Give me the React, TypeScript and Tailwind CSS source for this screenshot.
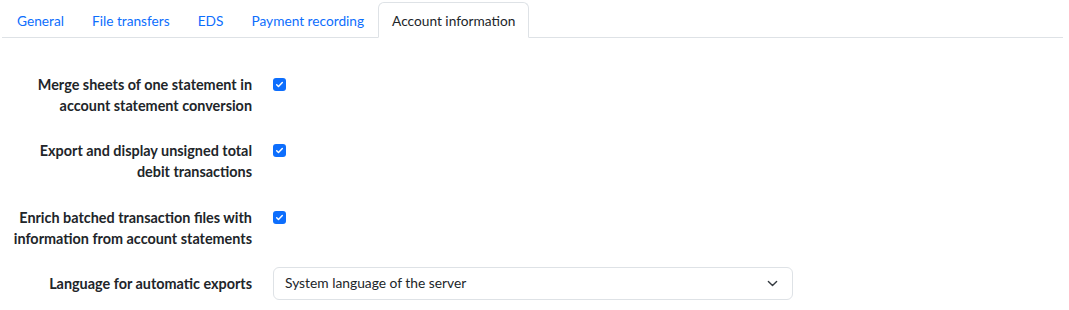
import React, { useState } from 'react';

const TABS = ['General', 'File transfers', 'EDS', 'Payment recording', 'Account information'];

const CheckRow = ({ label }: { label: React.ReactNode }) => (
  <div className="flex items-start">
    <div className="w-[252px] text-right font-bold text-[14.4px] leading-[21px] whitespace-nowrap">{label}</div>
    <div className="ml-[21px] pt-[4px]">
      <div className="w-[13px] h-[13px] rounded-[3px] bg-[#0d6efd] flex items-center justify-center">
        <svg width="9" height="9" viewBox="0 0 16 16" fill="none">
          <path d="M3 8.5l3.2 3.2L13 4.5" stroke="white" strokeWidth="2.6" strokeLinecap="round" strokeLinejoin="round" />
        </svg>
      </div>
    </div>
  </div>
);

export default function App() {
  const [active, setActive] = useState('Account information');

  return (
    <div className="bg-white text-[#212529] text-[14px] w-[1069px] h-[310px]" style={{ fontFamily: 'Lato, "Noto Sans", sans-serif' }}>
      {/* Tabs */}
      <div className="pl-[2px] pr-[6px] pt-[2px]">
        <ul className="flex border-b border-[#dee2e6] pl-[1px]">
          {TABS.map((t) => (
            <li key={t} className="-mb-px">
              <button
                onClick={() => setActive(t)}
                className={`h-[36px] px-[13px] border rounded-t-[6px] text-[13.7px] leading-[21px] whitespace-nowrap ${
                  active === t
                    ? 'border-[#dee2e6] border-b-white bg-white text-[#212529]'
                    : 'border-transparent text-[#0d6efd]'
                }`}
              >
                {t}
              </button>
            </li>
          ))}
        </ul>
      </div>

      {/* Form */}
      <div className="pt-[36px] flex flex-col">
        <CheckRow label={<>Merge sheets of one statement in<br />account statement conversion</>} />
        <div className="h-[24px]" />
        <CheckRow label={<>Export and display unsigned total<br />debit transactions</>} />
        <div className="h-[25px]" />
        <CheckRow label={<>Enrich batched transaction files with<br />information from account statements</>} />
        <div className="h-[18px]" />
        <div className="flex items-center">
          <div className="w-[252px] text-right font-bold text-[14.4px] leading-[21px] whitespace-nowrap">Language for automatic exports</div>
          <div className="ml-[21px] w-[520px] h-[33px] border border-[#dee2e6] rounded-[6px] flex items-center justify-between pl-[11px] pr-[14px]">
            <span className="text-[13.8px]">System language of the server</span>
            <svg width="11" height="11" viewBox="0 0 16 16" fill="none">
              <path d="M2 5l6 6 6-6" stroke="#343a40" strokeWidth="2" strokeLinecap="round" strokeLinejoin="round" />
            </svg>
          </div>
        </div>
      </div>
    </div>
  );
}
